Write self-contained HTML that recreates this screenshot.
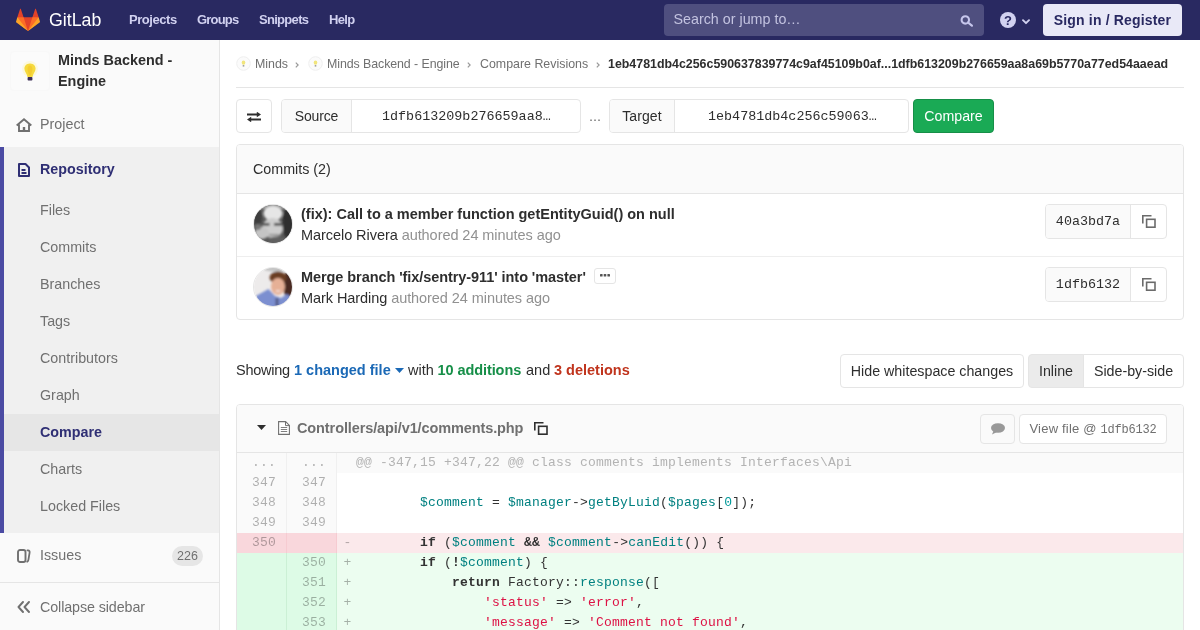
<!DOCTYPE html>
<html lang="en">
<head>
<meta charset="utf-8">
<title>Compare Revisions · Minds Backend - Engine</title>
<style>
*{box-sizing:border-box}
html,body{margin:0;padding:0}
body{width:1200px;height:630px;overflow:hidden;background:#fff;font-family:"Liberation Sans",Arial,sans-serif;font-size:14px;color:#2e2e2e;line-height:20px;position:relative}
a{text-decoration:none;color:inherit}
.mono{font-family:"Liberation Mono",monospace}
svg{display:block}
.abs{position:absolute;white-space:nowrap}
.page{position:absolute;left:0;top:0;width:1200px;height:630px;overflow:hidden;background:#fff;will-change:transform}
/* navbar */
.navbar{position:absolute;left:0;top:0;width:1200px;height:40px;background:#292961;color:#d1d1f0}
.logo{position:absolute;left:16px;top:8px;width:24px;height:24px}
.wordmark{position:absolute;left:48.500px;top:8.200px;font-size:18.700px;line-height:24px;color:#fff;transform:scaleX(.95);transform-origin:0 0}
.nav a{position:absolute;top:9.500px;font-weight:bold;font-size:13px;line-height:20px;color:#d1d1f0;letter-spacing:-0.45px}
.search{position:absolute;left:664px;top:4px;width:320px;height:32px;border-radius:4px;background:#4f4f7f;color:#c3c3e0;font-size:14.300px;line-height:31px;padding-left:9.500px}
.signin{position:absolute;left:1043px;top:4px;width:139px;height:32px;border-radius:4px;background:#e9e9f7;color:#292961;font-weight:bold;font-size:14px;line-height:32px;text-align:center;letter-spacing:.17px}
/* sidebar */
.sidebar{position:absolute;left:0;top:40px;width:220px;height:590px;background:#fafafa;border-right:1px solid #e5e5e5}
.ctx-avatar{position:absolute;left:10px;top:11px;width:40px;height:40px;border-radius:4px;background:#fbfbfb;border:1px solid #f8f8f8}
.ctx-title{position:absolute;left:58px;top:10px;font-weight:bold;font-size:14.400px;line-height:21px;color:#2e2e2e;width:150px}
.sb-item{position:absolute;left:0;width:219px;height:40px;font-size:14.300px;line-height:40px;color:#707070}
.sb-item span.t{position:absolute;left:40px;top:0;white-space:nowrap}
.sb-item svg{position:absolute}
.sb-active-wrap{position:absolute;left:0;top:106.500px;width:219px;height:386.500px;background:#f0f0f0;border-left:4px solid #4b4ba3}
.sub{position:absolute;left:0;width:215px;height:37px;line-height:37px;font-size:14.300px;color:#707070}
.sub span{position:absolute;left:36px;white-space:nowrap}
.badge{position:absolute;left:172px;top:10.500px;width:31px;height:20px;border-radius:10px;background:#e6e6e6;color:#707070;font-size:12.500px;line-height:20px;text-align:center}
/* content */
.crumbs{position:absolute;left:236px;top:40px;width:948px;height:48px;border-bottom:1px solid #e5e5e5;font-size:12.400px;line-height:16px;color:#707070}
.crumbs span{position:absolute;top:16px;white-space:nowrap}
.crumbs svg{position:absolute}
.btn{position:absolute;border:1px solid #e5e5e5;border-radius:4px;background:#fff;color:#2e2e2e;font-size:14px;text-align:center;white-space:nowrap}
.panel{position:absolute;left:236px;width:948px;border:1px solid #e5e5e5;border-radius:4px;background:#fff}
.cmp-swap{left:236px;top:99px;width:36px;height:34px}
.grp{position:absolute;top:99px;height:34px;border:1px solid #e5e5e5;border-radius:4px;background:#fff;overflow:hidden}
.grp .addon{position:absolute;left:0;top:0;height:32px;background:#fafafa;border-right:1px solid #e5e5e5;font-size:14px;letter-spacing:-.15px;line-height:33px;text-align:center;color:#2e2e2e}
.grp .val{position:absolute;top:0;height:32px;line-height:33px;font-size:13.400px;color:#2e2e2e;white-space:nowrap}
.cmp-go{left:913px;top:99px;width:81px;height:34px;background:#1aaa55;border-color:#168f48;color:#fff;line-height:33px;font-size:14.200px}
.commits{top:144px;height:176px}
.commits .hd{position:absolute;left:0;top:0;width:946px;height:49px;background:#fafafa;border-bottom:1px solid #e5e5e5;border-radius:3px 3px 0 0;line-height:48px;padding-left:16px;font-size:14.300px}
.crow{position:absolute;left:0;width:946px;height:63px}
.avatar{position:absolute;left:16px;top:10px;width:40px;height:40px;border-radius:50%;overflow:hidden;border:1px solid #e6e6e6}
.ctitle{position:absolute;left:64px;top:10px;font-weight:bold;font-size:14.500px;line-height:20px;white-space:nowrap;color:#2e2e2e}
.cmeta{position:absolute;left:64px;top:31px;font-size:14.500px;line-height:20px;white-space:nowrap;color:#2e2e2e}
.cmeta i{font-style:normal;color:#919191}
.sha{position:absolute;left:808px;top:10px;width:122px;height:35px;border:1px solid #e5e5e5;border-radius:4px;overflow:hidden;background:#fff}
.sha .h{position:absolute;left:0;top:0;width:85px;height:33px;background:#fafafa;border-right:1px solid #e5e5e5;font-size:13.400px;line-height:34px;text-align:center}
.sha svg{position:absolute;left:95.600px;top:10px}
.stats{position:absolute;left:0;top:360px;font-size:14.500px;line-height:20px}
.stats span{position:absolute;top:0;white-space:nowrap}
.diff{top:404px;height:240px;border-radius:4px 4px 0 0}
.diff .hd{position:absolute;left:0;top:0;width:946px;height:48px;background:#fafafa;border-bottom:1px solid #e5e5e5;border-radius:3px 3px 0 0}
.fname{position:absolute;left:60px;top:13px;font-weight:bold;letter-spacing:-.105px;font-size:14.500px;line-height:20px;color:#707070;white-space:nowrap}
.ln{position:absolute;width:50px;height:20px;border-right:1px solid #f0f0f0;background:#fafafa;color:rgba(0,0,0,.3);font-family:"Liberation Mono",monospace;font-size:13px;letter-spacing:.2px;line-height:20px;text-align:right;padding-right:10px}
.lc{position:absolute;left:100px;width:846px;height:20px;font-family:"Liberation Mono",monospace;font-size:13px;letter-spacing:.2px;line-height:20px;white-space:pre;color:#333;padding-left:19px}
.lc b.m{position:absolute;left:6.400px;font-weight:normal;color:rgba(0,0,0,.3)}
.row{position:absolute;left:0;width:946px;height:20px}
.del .ln{background:#f9d7dc;border-color:#f6cbd1}
.del .lc{background:#fbe9eb}
.add .ln{background:#ddfbe6;border-color:#cbf0d5}
.add .lc{background:#ecfdf0}
.hunk .lc{background:#fafafa;color:#b3b3b3}
.v{color:#008080}.k{font-weight:bold}.s{color:#d14}.n{color:#099}
</style>
</head>
<body>
<div class="page">
<div class="navbar">
  <svg class="logo" viewBox="0 0 36 36"><path fill="#e24329" d="M2 14l9.380 9v-9l-4-12.280c-.205-.632-1.176-.632-1.380 0z"/><path fill="#e24329" d="M34 14l-9.380 9v-9l4-12.280c.205-.632 1.176-.632 1.380 0z"/><path fill="#e24329" d="M18 34.380L3 14h30z"/><path fill="#fc6d26" d="M18 34.380L11.380 14H2l4 11z"/><path fill="#fc6d26" d="M18 34.380L24.620 14H34l-4 11z"/><path fill="#fca326" d="M2 14L.1 20.160c-.180.565 0 1.200.5 1.560l17.400 12.660z"/><path fill="#fca326" d="M34 14l1.900 6.160c.180.565 0 1.200-.5 1.560L18 34.380z"/></svg>
  <div class="wordmark">GitLab</div>
  <div class="nav">
    <a style="left:129px">Projects</a>
    <a style="left:197px;letter-spacing:-.8px">Groups</a>
    <a style="left:259px;letter-spacing:-.7px">Snippets</a>
    <a style="left:329px;letter-spacing:-.65px">Help</a>
  </div>
  <div class="search">Search or jump to…</div>
  <svg class="abs" style="left:960.400px;top:15.200px" width="14" height="13" viewBox="0 0 14 13"><circle cx="5.300" cy="4.900" r="3.700" fill="none" stroke="#c6c6ec" stroke-width="2.100"/><path d="M8 7.500l3.900 3.200" stroke="#c6c6ec" stroke-width="2.200" stroke-linecap="round"/></svg>
  <svg class="abs" style="left:1000px;top:12px" width="16" height="16" viewBox="0 0 16 16"><circle cx="8" cy="8" r="8" fill="#d1d1f0"/><text x="8" y="12.600" text-anchor="middle" font-family="Liberation Sans, sans-serif" font-weight="bold" font-size="13" fill="#292961">?</text></svg>
  <svg class="abs" style="left:1021.500px;top:18.600px" width="8" height="6" viewBox="0 0 8 6"><path d="M1 1.200l3 3 3-3" fill="none" stroke="#d1d1f0" stroke-width="1.900" stroke-linecap="round" stroke-linejoin="round"/></svg>
  <div class="signin">Sign in / Register</div>
</div>

<div class="sidebar">
  <div class="ctx-avatar"><svg class="abs" style="left:11px;top:8.500px" width="16" height="22" viewBox="0 0 16 22"><ellipse cx="8" cy="8" rx="7.800" ry="8" fill="#fdf6b8" opacity=".45"/><path d="M8 2.500c4 0 5.600 2.800 5.600 5.300 0 3-2.700 5-3.100 8.200h-5c-.4-3.200-3.100-5.200-3.100-8.200 0-2.500 1.600-5.300 5.600-5.300z" fill="#f6da3e"/><path d="M8 4.500c1.600 0 2.400 1.600 2.400 3.500s-1 4-1.400 6.500H7C6.600 12 5.600 9.900 5.600 8s.8-3.500 2.400-3.500z" fill="#f3c62a" opacity=".7"/><rect x="5.600" y="16" width="4.800" height="3.600" rx=".8" fill="#3d2f57"/></svg></div>
  <div class="ctx-title">Minds Backend - Engine</div>
  <div class="sb-item" style="top:64px"><svg style="left:16px;top:13.500px" width="16" height="14" viewBox="0 0 16 14"><path d="M.7 7.500L8 1.300l7.300 6.200M3 6.500V13h10V6.500" fill="none" stroke="#707070" stroke-width="1.900" stroke-linejoin="miter"/><rect x="6.800" y="9" width="2.400" height="4" fill="#707070"/></svg><span class="t">Project</span></div>
  <div class="sb-active-wrap">
    <svg class="abs" style="left:14px;top:16px" width="12" height="14" viewBox="0 0 12 14"><path d="M1 1h6.500L11 4.500V13H1z" fill="none" stroke="#2f2f74" stroke-width="2" stroke-linejoin="round"/><path d="M3.500 7h4M3.500 10h5" stroke="#2f2f74" stroke-width="1.800"/></svg>
    <div class="sub" style="top:2px;font-weight:bold;color:#2f2f74;height:40px;line-height:40px"><span>Repository</span></div>
    <div class="sub" style="top:45.500px"><span>Files</span></div>
    <div class="sub" style="top:82.500px"><span>Commits</span></div>
    <div class="sub" style="top:119.500px"><span>Branches</span></div>
    <div class="sub" style="top:156.500px"><span>Tags</span></div>
    <div class="sub" style="top:193.500px"><span>Contributors</span></div>
    <div class="sub" style="top:230.500px"><span>Graph</span></div>
    <div class="sub" style="top:267.500px;background:#e6e6e6;font-weight:bold;color:#2f2f74"><span>Compare</span></div>
    <div class="sub" style="top:304.500px"><span>Charts</span></div>
    <div class="sub" style="top:341.500px"><span>Locked Files</span></div>
  </div>
  <div class="sb-item" style="top:495px"><svg style="left:17px;top:13.500px" width="14" height="14" viewBox="0 0 14 14"><rect x="1" y="1" width="7.500" height="12" rx="2" fill="none" stroke="#707070" stroke-width="1.900"/><path d="M10.400 1.300h.5c1.300.2 1.900 1 1.700 2.300l-1.200 7.300c-.1.800-.5 1.500-1.200 1.800" fill="none" stroke="#707070" stroke-width="1.800" stroke-linecap="round"/></svg><span class="t">Issues</span><div class="badge">226</div></div>
  <div class="sb-item" style="top:542px;border-top:1px solid #e5e5e5;height:48px;line-height:49px"><svg style="left:17px;top:18.300px" width="13" height="12" viewBox="0 0 13 12"><path d="M6 1L1.500 6 6 11M12 1L7.500 6 12 11" fill="none" stroke="#707070" stroke-width="1.900" stroke-linecap="round" stroke-linejoin="round"/></svg><span class="t" style="letter-spacing:-.1px">Collapse sidebar</span></div>
</div>

<div class="crumbs">
  <svg style="left:0;top:16px" width="15" height="15" viewBox="0 0 15 15"><circle cx="7.500" cy="7.500" r="6.800" fill="#fbfbfb" stroke="#efefef"/><ellipse cx="7.500" cy="6.600" rx="1.800" ry="2.200" fill="#f1e57c"/><rect x="6.700" y="9.200" width="1.600" height="1.300" fill="#8a8a8a"/></svg>
  <span style="left:19px">Minds</span>
  <svg style="left:59px;top:21.600px" width="4" height="6" viewBox="0 0 4 6"><path d="M.8.700l2.300 2.300L.8 5.300" fill="none" stroke="#999" stroke-width="1.200"/></svg>
  <svg style="left:72px;top:16px" width="15" height="15" viewBox="0 0 15 15"><circle cx="7.500" cy="7.500" r="6.800" fill="#fbfbfb" stroke="#efefef"/><ellipse cx="7.500" cy="6.600" rx="1.800" ry="2.200" fill="#f1e57c"/><rect x="6.700" y="9.200" width="1.600" height="1.300" fill="#8a8a8a"/></svg>
  <span style="left:91px;letter-spacing:-.08px">Minds Backend - Engine</span>
  <svg style="left:231px;top:21.600px" width="4" height="6" viewBox="0 0 4 6"><path d="M.8.700l2.300 2.300L.8 5.300" fill="none" stroke="#999" stroke-width="1.200"/></svg>
  <span style="left:244px">Compare Revisions</span>
  <svg style="left:359.500px;top:21.600px" width="4" height="6" viewBox="0 0 4 6"><path d="M.8.700l2.300 2.300L.8 5.300" fill="none" stroke="#999" stroke-width="1.200"/></svg>
  <span style="left:372px;color:#2e2e2e;font-weight:bold">1eb4781db4c256c590637839774c9af45109b0af...1dfb613209b276659aa8a69b5770a77ed54aaead</span>
</div>

<div class="btn cmp-swap"><svg width="14" height="10" viewBox="0 0 14 10" style="position:absolute;left:10.300px;top:11.700px"><path d="M0 1.600h9.800V-.3l4.200 2.800-4.200 2.800V3.500H0zM14 6.500H4.200V4.700L0 7.500l4.200 2.800V8.400H14z" fill="#2e2e2e"/></svg></div>
<div class="grp" style="left:281px;width:300px"><div class="addon" style="width:70px">Source</div><div class="val mono" style="left:100px">1dfb613209b276659aa8…</div></div>
<div class="abs" style="left:589px;top:106px;font-size:14.500px;color:#707070">...</div>
<div class="grp" style="left:609px;width:300px"><div class="addon" style="width:65px;letter-spacing:.1px">Target</div><div class="val mono" style="left:98px">1eb4781db4c256c59063…</div></div>
<div class="btn cmp-go">Compare</div>

<div class="panel commits">
  <div class="hd">Commits (2)</div>
  <div class="crow" style="top:49px;border-bottom:1px solid #eee">
    <div class="avatar"><svg width="38" height="38" viewBox="0 0 38 38"><defs><filter id="b1" x="-20%" y="-20%" width="140%" height="140%"><feGaussianBlur stdDeviation="1.200"/></filter></defs><rect width="38" height="38" fill="#555"/><g filter="url(#b1)"><rect x="-4" y="-4" width="46" height="8" fill="#999"/><ellipse cx="19" cy="8.500" rx="9.500" ry="7.500" fill="#e6e6e6"/><ellipse cx="18.500" cy="23" rx="10.500" ry="10" fill="#cdcdcd"/><ellipse cx="3.500" cy="12" rx="4.500" ry="8" fill="#3c3c3c"/><ellipse cx="34" cy="18" rx="5.500" ry="15" fill="#2f2f2f"/><rect x="8.500" y="18" width="7" height="2.600" fill="#444"/><rect x="20" y="18" width="8" height="2.600" fill="#444"/><ellipse cx="8" cy="28" rx="7" ry="6" fill="#c4c4c4"/><ellipse cx="4" cy="22" rx="3" ry="3" fill="#777"/><ellipse cx="23" cy="35.500" rx="9" ry="4" fill="#606060"/><rect x="15" y="29" width="10" height="1.600" fill="#8a8a8a"/></g></svg></div>
    <div class="ctitle">(fix): Call to a member function getEntityGuid() on null</div>
    <div class="cmeta" style="letter-spacing:-.06px">Marcelo Rivera <i>authored 24 minutes ago</i></div>
    <div class="sha"><div class="h mono">40a3bd7a</div><svg width="14" height="13" viewBox="0 0 14 13"><path d="M.8 8.500V.8h8.700" fill="none" stroke="#6b6b6b" stroke-width="1.600"/><rect x="4.600" y="4.300" width="8.400" height="7.900" fill="none" stroke="#6b6b6b" stroke-width="1.600"/></svg></div>
  </div>
  <div class="crow" style="top:112px">
    <div class="avatar"><svg width="38" height="38" viewBox="0 0 38 38"><defs><filter id="b2" x="-20%" y="-20%" width="140%" height="140%"><feGaussianBlur stdDeviation="1.100"/></filter></defs><rect width="38" height="38" fill="#edebeb"/><g filter="url(#b2)"><ellipse cx="22" cy="-1" rx="14" ry="5" fill="#c4c4c4"/><ellipse cx="37" cy="17" rx="8" ry="16" fill="#4a2a22"/><ellipse cx="24" cy="9.500" rx="8.500" ry="6" fill="#6b3d22"/><ellipse cx="24" cy="18.500" rx="7" ry="8.500" fill="#e6b096"/><path d="M-2 42L2 28l12.500-7 6.500 7 6 2 6-4 7 5v11z" fill="#7b8fd0"/><rect x="21.500" y="30" width="3" height="10" fill="#555c88"/><ellipse cx="24" cy="23" rx="2.600" ry="1.100" fill="#f3dcd6"/></g></svg></div>
    <div class="ctitle" style="letter-spacing:-.07px">Merge branch 'fix/sentry-911' into 'master'</div>
    <div class="abs" style="left:357px;top:11px;width:22px;height:16px;border:1px solid #e5e5e5;border-radius:3px;background:#fff"><svg style="position:absolute;left:5px;top:5.200px" width="10" height="3" viewBox="0 0 10 3"><rect x="0" y="0" width="2.600" height="2.600" rx=".6" fill="#555"/><rect x="3.700" y="0" width="2.600" height="2.600" rx=".6" fill="#555"/><rect x="7.400" y="0" width="2.600" height="2.600" rx=".6" fill="#555"/></svg></div>
    <div class="cmeta" style="letter-spacing:-.07px">Mark Harding <i>authored 24 minutes ago</i></div>
    <div class="sha"><div class="h mono">1dfb6132</div><svg width="14" height="13" viewBox="0 0 14 13"><path d="M.8 8.500V.8h8.700" fill="none" stroke="#6b6b6b" stroke-width="1.600"/><rect x="4.600" y="4.300" width="8.400" height="7.900" fill="none" stroke="#6b6b6b" stroke-width="1.600"/></svg></div>
  </div>
</div>

<div class="stats">
  <span style="left:236px;letter-spacing:-.25px">Showing</span>
  <span style="left:294px;font-weight:bold;color:#1b69b6">1 changed file</span>
  <svg class="abs" style="left:395px;top:8px" width="9" height="5" viewBox="0 0 9 5"><path d="M0 0h9L4.500 5z" fill="#1b69b6"/></svg>
  <span style="left:408px">with</span>
  <span style="left:437.500px;font-weight:bold;letter-spacing:-.08px;color:#168f48">10 additions</span>
  <span style="left:526px">and</span>
  <span style="left:554px;font-weight:bold;color:#c0341d">3 deletions</span>
</div>
<div class="btn" style="left:840px;top:354px;width:184px;height:34px;line-height:33px;font-size:14.250px">Hide whitespace changes</div>
<div class="btn" style="left:1028px;top:354px;width:56px;height:34px;line-height:33px;background:#ebebeb;border-radius:4px 0 0 4px;font-size:14.250px">Inline</div>
<div class="btn" style="left:1083px;top:354px;width:101px;height:34px;line-height:33px;border-radius:0 4px 4px 0;font-size:14.250px">Side-by-side</div>

<div class="panel diff">
  <div class="hd">
    <svg class="abs" style="left:20px;top:20px" width="9" height="5" viewBox="0 0 9 5"><path d="M0 0h9L4.500 5z" fill="#2e2e2e"/></svg>
    <svg class="abs" style="left:41px;top:16px" width="12" height="14" viewBox="0 0 12 14"><path d="M.6.600h7L11.400 4.400V13.400H.6z" fill="#fff" stroke="#707070" stroke-width="1.100"/><path d="M7.500.6v4h4" fill="none" stroke="#707070" stroke-width="1"/><path d="M2.800 6.500h6.400M2.800 8.500h6.400M2.800 10.500h6.400" stroke="#707070" stroke-width=".9"/></svg>
    <div class="fname">Controllers/api/v1/comments.php</div>
    <svg class="abs" style="left:297px;top:17px" width="14" height="13" viewBox="0 0 14 13"><path d="M.8 8.500V.8h8.700" fill="none" stroke="#2e2e2e" stroke-width="1.600"/><rect x="4.600" y="4.300" width="8.400" height="7.900" fill="none" stroke="#2e2e2e" stroke-width="1.600"/></svg>
    <div class="btn" style="left:743px;top:8.500px;width:35px;height:30px;background:#fafafa"><svg style="position:absolute;left:10px;top:8px" width="14" height="12" viewBox="0 0 14 12"><ellipse cx="7" cy="5" rx="7" ry="4.800" fill="#999"/><path d="M2.500 8L1 11.500 6 9z" fill="#999"/></svg></div>
    <div class="btn" style="left:782px;top:8.500px;width:148px;height:30px;line-height:28px;font-size:13px;letter-spacing:.2px;color:#707070">View file @ <span class="mono" style="font-size:12px;letter-spacing:-.2px">1dfb6132</span></div>
  </div>
  <div class="row hunk" style="top:48px"><div class="ln" style="left:0">...</div><div class="ln" style="left:50px">...</div><div class="lc">@@ -347,15 +347,22 @@ class comments implements Interfaces\Api</div></div>
  <div class="row" style="top:68px"><div class="ln" style="left:0">347</div><div class="ln" style="left:50px">347</div><div class="lc"></div></div>
  <div class="row" style="top:88px"><div class="ln" style="left:0">348</div><div class="ln" style="left:50px">348</div><div class="lc">        <span class="v">$comment</span> = <span class="v">$manager</span>-&gt;<span class="v">getByLuid</span>(<span class="v">$pages</span>[<span class="n">0</span>]);</div></div>
  <div class="row" style="top:108px"><div class="ln" style="left:0">349</div><div class="ln" style="left:50px">349</div><div class="lc"></div></div>
  <div class="row del" style="top:128px"><div class="ln" style="left:0">350</div><div class="ln" style="left:50px"></div><div class="lc"><b class="m">-</b>        <span class="k">if</span> (<span class="v">$comment</span> <span class="k">&amp;&amp;</span> <span class="v">$comment</span>-&gt;<span class="v">canEdit</span>()) {</div></div>
  <div class="row add" style="top:148px"><div class="ln" style="left:0"></div><div class="ln" style="left:50px">350</div><div class="lc"><b class="m">+</b>        <span class="k">if</span> (<span class="k">!</span><span class="v">$comment</span>) {</div></div>
  <div class="row add" style="top:168px"><div class="ln" style="left:0"></div><div class="ln" style="left:50px">351</div><div class="lc"><b class="m">+</b>            <span class="k">return</span> Factory::<span class="v">response</span>([</div></div>
  <div class="row add" style="top:188px"><div class="ln" style="left:0"></div><div class="ln" style="left:50px">352</div><div class="lc"><b class="m">+</b>                <span class="s">'status'</span> =&gt; <span class="s">'error'</span>,</div></div>
  <div class="row add" style="top:208px"><div class="ln" style="left:0"></div><div class="ln" style="left:50px">353</div><div class="lc"><b class="m">+</b>                <span class="s">'message'</span> =&gt; <span class="s">'Comment not found'</span>,</div></div>
</div>

</div>
</body>
</html>
